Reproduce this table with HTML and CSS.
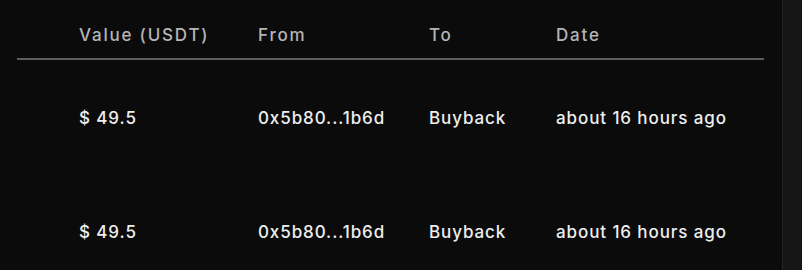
FILE: index.html
```html
<!DOCTYPE html>
<html>
<head>
<meta charset="utf-8">
<link rel="stylesheet" href="styles.css">
</head>
<body>
<div class="page">
  <div class="main">
    <div class="table">
      <div class="row head">
        <div class="cell c1">Value (USDT)</div>
        <div class="cell c2">From</div>
        <div class="cell c3">To</div>
        <div class="cell c4">Date</div>
      </div>
      <div class="row body">
        <div class="cell c1">$ 49.5</div>
        <div class="cell c2">0x5b80...1b6d</div>
        <div class="cell c3">Buyback</div>
        <div class="cell c4">about 16 hours ago</div>
      </div>
      <div class="row body">
        <div class="cell c1">$ 49.5</div>
        <div class="cell c2">0x5b80...1b6d</div>
        <div class="cell c3">Buyback</div>
        <div class="cell c4">about 16 hours ago</div>
      </div>
    </div>
  </div>
  <div class="side"></div>
</div>
</body>
</html>
```
FILE: styles.css
```css
html, body {
  margin: 0;
  padding: 0;
  background: #0b0b0b;
  height: 100%;
  overflow: hidden;
}
.page {
  display: flex;
  height: 270px;
  overflow: hidden;
}
.main {
  width: 782px;
  padding: 0 18px 0 17px;
  box-sizing: border-box;
}
.side {
  flex: 1;
  background: #161616;
  border-left: 1px solid #222;
}
.table {
  font-family: "Inter", "DejaVu Sans", sans-serif;
}
.row {
  display: grid;
  grid-template-columns: 62px 179px 171px 127px 1fr;
}
.row .c1 { grid-column: 2; }
.row .c2 { grid-column: 3; }
.row .c3 { grid-column: 4; }
.row .c4 { grid-column: 5; }
.head {
  height: 60px;
  align-items: end;
  border-bottom: 2px solid #5e5e5e;
  box-sizing: border-box;
  padding-bottom: 13px;
  color: #b5b5b5;
  font-size: 17px;
  letter-spacing: 1.8px;
  font-weight: 500;
}
.body {
  height: 114px;
  align-items: center;
  color: #eeeeee;
  font-size: 17px;
  font-weight: 500;
  letter-spacing: 0.9px;
  padding-top: 2px;
  box-sizing: border-box;
}
.cell {
  white-space: nowrap;
}
```
